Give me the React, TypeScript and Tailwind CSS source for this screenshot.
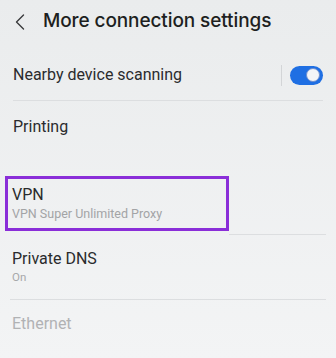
export default function App() {
  return (
    <div className="w-[336px] h-[358px] overflow-hidden bg-gradient-to-b from-[#eaeced] to-[#f3f4f5] font-['Roboto','Inter',sans-serif] text-[#1e1f21]">
      <div className="h-[40px] flex items-center pl-[15px] pt-[3px]">
        <svg width="10" height="16" viewBox="0 0 10 16" fill="none">
          <path d="M8.5 1 L1.5 8 L8.5 15" stroke="#3a3b3d" strokeWidth="1.4" strokeLinecap="round" strokeLinejoin="round" />
        </svg>
        <span className="ml-[18px] font-['Inter',sans-serif] text-[19px] font-medium tracking-[-0.1px]">More connection settings</span>
      </div>

      <div className="mt-[10px] h-[50px] flex items-center justify-between pl-[13px] pr-[13px]">
        <span className="text-[16px] text-[#2a2b2d]">Nearby device scanning</span>
        <div className="flex items-center">
          <div className="w-px h-[21px] bg-[#d3d5d7]" />
          <div className="ml-[8px] w-[33px] h-[19px] rounded-full bg-[#1f6fe3] flex items-center justify-end pr-[3px]">
            <div className="w-[14px] h-[14px] rounded-full bg-[#f4f5f7] border-[1px] border-[#6e8fd0]" />
          </div>
        </div>
      </div>
      <div className="mx-[13px] h-px bg-[#dcdee0]" />

      <div className="h-[52px] flex items-center pl-[13px]">
        <span className="text-[16px] text-[#2a2b2d]">Printing</span>
      </div>

      <div className="mt-[23px] ml-[5px] w-[224px] h-[55px] border-[3px] border-[#8a2ed8] pl-[4px] pt-[6px]">
        <div className="text-[16px] leading-[20px] text-[#2a2b2d]">VPN</div>
        <div className="mt-[1px] text-[12.5px] leading-[16px] text-[#a3a4a6]">VPN Super Unlimited Proxy</div>
      </div>
      <div className="mt-[3px] ml-[229px] mr-[10px] h-px bg-[#dcdee0]" />

      <div className="h-[64px] pl-[12px] pt-[14px]">
        <div className="text-[16px] leading-[20px] text-[#2a2b2d]">Private DNS</div>
        <div className="mt-[1px] text-[11.5px] leading-[14px] text-[#a7a8aa]">On</div>
      </div>
      <div className="mx-[10px] h-px bg-[#dcdee0]" />

      <div className="pl-[12px] pt-[14px]">
        <div className="text-[16px] leading-[20px] text-[#b1b2b4]">Ethernet</div>
      </div>
    </div>
  );
}
